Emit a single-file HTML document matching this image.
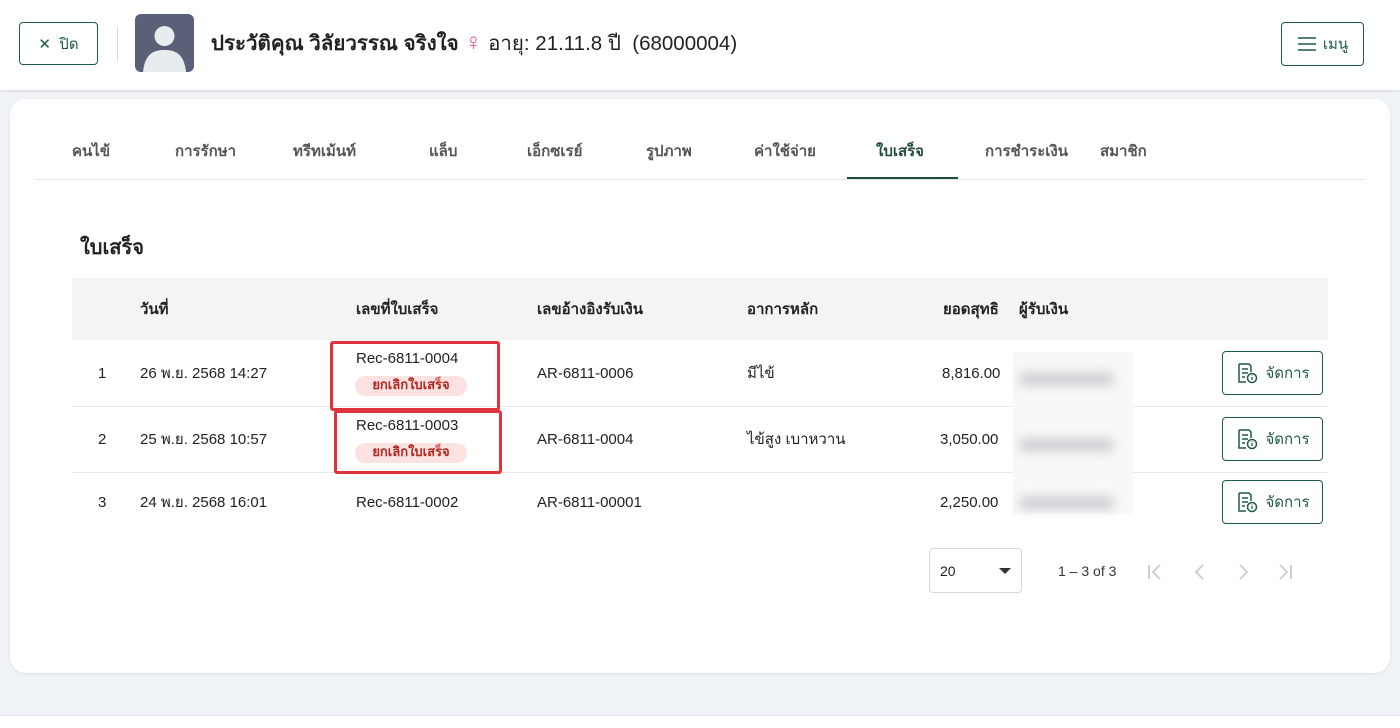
<!DOCTYPE html>
<html><head><meta charset="utf-8"><style>
*{box-sizing:border-box;margin:0;padding:0}
body{width:1400px;height:728px;overflow:hidden;background:#eff2f6;font-family:"Liberation Sans","Noto Sans CJK SC",sans-serif;color:#222;position:relative}
.hdr{position:absolute;left:0;top:0;width:1400px;height:90px;background:#fff;box-shadow:0 1px 3px rgba(0,0,0,.1)}
.btn{position:absolute;border:1px solid #1f5a45;border-radius:4px;background:#fff;color:#1f5a45;display:flex;align-items:center;justify-content:center;font-size:15px}
.card{position:absolute;left:10px;top:99px;width:1380px;height:574px;background:#fff;border-radius:16px;box-shadow:0 1px 2px rgba(0,0,0,.08)}
.tab{position:absolute;top:139px;font-size:15px;color:#555;font-weight:bold}
.abs{position:absolute}
.cell{position:absolute;font-size:15px;color:#222}
.th{position:absolute;font-size:15px;font-weight:bold;color:#222;top:297px}
.badge{position:absolute;background:#fde2e2;color:#b3261e;font-size:13px;font-weight:bold;border-radius:10px;height:20px;line-height:18px;padding:0 14px;width:112px;text-align:center}
.red{position:absolute;border:3px solid #e0333b;border-radius:3px}
.mg{position:absolute;left:1222px;width:101px;height:44px;font-size:15px}
.blur{position:absolute;left:1013px;width:120px;background:#f7f8f9}
.blur i{position:absolute;left:6px;top:20px;width:95px;height:14px;background:#d0d2d5;filter:blur(5px);border-radius:6px}
</style></head><body>
<div class="hdr">
 <div class="btn" style="left:19px;top:22px;width:79px;height:43px">✕&nbsp;&nbsp;ปิด</div>
 <div class="abs" style="left:117px;top:26px;width:1px;height:36px;background:#ddd"></div>
 <div class="abs" style="left:135px;top:14px;width:59px;height:58px;background:#5a6078;border-radius:6px;overflow:hidden">
  <svg width="59" height="58"><circle cx="29.5" cy="22" r="10" fill="#e9ecef"/><path d="M8 58 C10 40 18 36 29.5 36 C41 36 49 40 51 58Z" fill="#e9ecef"/></svg>
 </div>
 <div class="abs" style="left:211px;top:27px;font-size:20.5px;font-weight:bold;white-space:nowrap">ประวัติคุณ วิลัยวรรณ จริงใจ <span style="color:#e0559b;font-weight:normal;font-size:24px">♀</span> <span style="font-weight:normal">อายุ: 21.11.8 ปี&nbsp; (68000004)</span></div>
 <div class="btn" style="left:1281px;top:22px;width:83px;height:44px"><svg width="20" height="16" style="margin-right:6px"><path d="M1 2h18M1 8h18M1 14h18" stroke="#1f5a45" stroke-width="1.6"/></svg>เมนู</div>
</div>
<div class="card"></div>
<div class="tab" style="left:72px">คนไข้</div>
<div class="tab" style="left:175px">การรักษา</div>
<div class="tab" style="left:293px">ทรีทเม้นท์</div>
<div class="tab" style="left:429px">แล็บ</div>
<div class="tab" style="left:527px">เอ็กซเรย์</div>
<div class="tab" style="left:646px">รูปภาพ</div>
<div class="tab" style="left:754px">ค่าใช้จ่าย</div>
<div class="tab" style="left:876px;color:#1f4d3a">ใบเสร็จ</div>
<div class="tab" style="left:985px">การชำระเงิน</div>
<div class="tab" style="left:1100px">สมาชิก</div>
<div class="abs" style="left:36px;top:179px;width:1328px;height:1px;background:#e3e6ea"></div>
<div class="abs" style="left:847px;top:177px;width:111px;height:2px;background:#1f4d3a"></div>
<div class="abs" style="left:80px;top:231px;font-size:20px;font-weight:bold">ใบเสร็จ</div>
<div class="abs" style="left:72px;top:278px;width:1256px;height:62px;background:#f3f4f6"></div>
<div class="th" style="left:140px">วันที่</div>
<div class="th" style="left:356px">เลขที่ใบเสร็จ</div>
<div class="th" style="left:537px">เลขอ้างอิงรับเงิน</div>
<div class="th" style="left:747px">อาการหลัก</div>
<div class="th" style="left:943px">ยอดสุทธิ</div>
<div class="th" style="left:1019px">ผู้รับเงิน</div>
<div class="abs" style="left:72px;top:406px;width:1256px;height:1px;background:#e6e8eb"></div>
<div class="abs" style="left:72px;top:472px;width:1256px;height:1px;background:#e6e8eb"></div>
<div class="blur" style="top:352px;height:162px"></div>
<div class="blur" style="top:352px;height:50px;background:none"><i></i></div>
<div class="blur" style="top:418px;height:50px;background:none"><i></i></div>
<div class="blur" style="top:476px;height:50px;background:none"><i></i></div>
<!-- row1 -->
<div class="cell" style="left:98px;top:365px">1</div>
<div class="cell" style="left:140px;top:361px">26 พ.ย. 2568 14:27</div>
<div class="cell" style="left:356px;top:350px">Rec-6811-0004</div>
<div class="badge" style="left:355px;top:376px">ยกเลิกใบเสร็จ</div>
<div class="red" style="left:330px;top:341px;width:170px;height:70px"></div>
<div class="cell" style="left:537px;top:365px">AR-6811-0006</div>
<div class="cell" style="left:747px;top:361px">มีไข้</div>
<div class="cell" style="left:942px;top:365px">8,816.00</div>
<!-- row2 -->
<div class="cell" style="left:98px;top:431px">2</div>
<div class="cell" style="left:140px;top:427px">25 พ.ย. 2568 10:57</div>
<div class="cell" style="left:356px;top:417px">Rec-6811-0003</div>
<div class="badge" style="left:355px;top:443px">ยกเลิกใบเสร็จ</div>
<div class="red" style="left:334px;top:410px;width:168px;height:64px"></div>
<div class="cell" style="left:537px;top:431px">AR-6811-0004</div>
<div class="cell" style="left:747px;top:427px">ไข้สูง เบาหวาน</div>
<div class="cell" style="left:940px;top:431px">3,050.00</div>
<!-- row3 -->
<div class="cell" style="left:98px;top:494px">3</div>
<div class="cell" style="left:140px;top:490px">24 พ.ย. 2568 16:01</div>
<div class="cell" style="left:356px;top:494px">Rec-6811-0002</div>
<div class="cell" style="left:537px;top:494px">AR-6811-00001</div>
<div class="cell" style="left:940px;top:494px">2,250.00</div>
<div class="btn mg" style="top:351px"><svg width="24" height="22" style="margin-right:6px"><path d="M4 2h10l2 2v6M4 2v18h7" fill="none" stroke="#1f5a45" stroke-width="1.5"/><path d="M7 7h6M7 11h6M7 15h3" stroke="#1f5a45" stroke-width="1.5"/><circle cx="17" cy="16" r="4.5" fill="#fff" stroke="#1f5a45" stroke-width="1.5"/><path d="M17 15v3M17 13.5v.5" stroke="#1f5a45" stroke-width="1.3"/></svg>จัดการ</div>
<div class="btn mg" style="top:417px"><svg width="24" height="22" style="margin-right:6px"><path d="M4 2h10l2 2v6M4 2v18h7" fill="none" stroke="#1f5a45" stroke-width="1.5"/><path d="M7 7h6M7 11h6M7 15h3" stroke="#1f5a45" stroke-width="1.5"/><circle cx="17" cy="16" r="4.5" fill="#fff" stroke="#1f5a45" stroke-width="1.5"/><path d="M17 15v3M17 13.5v.5" stroke="#1f5a45" stroke-width="1.3"/></svg>จัดการ</div>
<div class="btn mg" style="top:480px"><svg width="24" height="22" style="margin-right:6px"><path d="M4 2h10l2 2v6M4 2v18h7" fill="none" stroke="#1f5a45" stroke-width="1.5"/><path d="M7 7h6M7 11h6M7 15h3" stroke="#1f5a45" stroke-width="1.5"/><circle cx="17" cy="16" r="4.5" fill="#fff" stroke="#1f5a45" stroke-width="1.5"/><path d="M17 15v3M17 13.5v.5" stroke="#1f5a45" stroke-width="1.3"/></svg>จัดการ</div>
<!-- pagination -->
<div class="abs" style="left:929px;top:548px;width:93px;height:45px;border:1px solid #d6d9dd;border-radius:4px"></div>
<div class="cell" style="left:940px;top:563px;font-size:14px">20</div>
<div class="abs" style="left:999px;top:568px;width:0;height:0;border-left:6px solid transparent;border-right:6px solid transparent;border-top:6px solid #333"></div>
<div class="cell" style="left:1058px;top:563px;font-size:14px;color:#333">1 – 3 of 3</div>
<svg class="abs" style="left:1140px;top:560px" width="160" height="24"><g fill="none" stroke="#c8cbd0" stroke-width="1.8"><path d="M9 5v14M20 5l-7 7 7 7"/><path d="M63 5l-7 7 7 7"/><path d="M100 5l7 7-7 7"/><path d="M140 5l7 7-7 7M151 5v14"/></g></svg>
<div class="abs" style="left:0;top:715px;width:1400px;height:13px;background:#fff;border-top:1px solid #e3e6ea"></div>
</body></html>
